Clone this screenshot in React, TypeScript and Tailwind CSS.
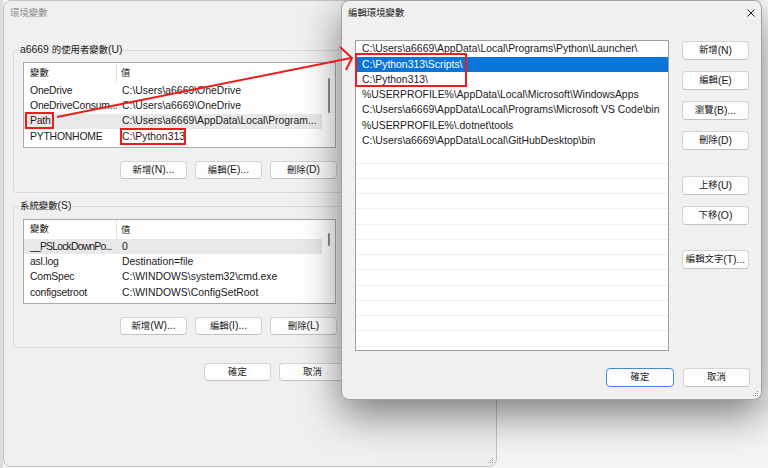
import type { ReactNode } from "react";

const userVars = [
  ["OneDrive", "C:\\Users\\a6669\\OneDrive"],
  ["OneDriveConsum...", "C:\\Users\\a6669\\OneDrive"],
  ["Path", "C:\\Users\\a6669\\AppData\\Local\\Program..."],
  ["PYTHONHOME", "C:\\Python313"],
];

const systemVars = [
  ["__PSLockDownPo...", "0"],
  ["asl.log", "Destination=file"],
  ["ComSpec", "C:\\WINDOWS\\system32\\cmd.exe"],
  ["configsetroot", "C:\\WINDOWS\\ConfigSetRoot"],
];

const paths = [
  "C:\\Users\\a6669\\AppData\\Local\\Programs\\Python\\Launcher\\",
  "C:\\Python313\\Scripts\\",
  "C:\\Python313\\",
  "%USERPROFILE%\\AppData\\Local\\Microsoft\\WindowsApps",
  "C:\\Users\\a6669\\AppData\\Local\\Programs\\Microsoft VS Code\\bin",
  "%USERPROFILE%\\.dotnet\\tools",
  "C:\\Users\\a6669\\AppData\\Local\\GitHubDesktop\\bin",
];

// CJK glyphs render a bit smaller than the latin text in the original
function Zh({ children }: { children: ReactNode }) {
  return <span className="text-[9.4px]">{children}</span>;
}

function Button({ children, primary, short }: { children: ReactNode; primary?: boolean; short?: boolean }) {
  if (primary) {
    return (
      <div className="flex h-[19px] w-[68px] items-center justify-center rounded-[4px] border border-[#3f8bd8] bg-[#fdfdfd]">
        {children}
      </div>
    );
  }
  return (
    <div
      className={
        short
          ? "flex h-[18px] w-[67px] items-center justify-center rounded-[4px] border border-[#d3d3d3] border-b-[#c2c2c2] bg-[#fdfdfd]"
          : "flex h-[19px] w-[67px] items-center justify-center rounded-[4px] border border-[#d3d3d3] border-b-[#c2c2c2] bg-[#fdfdfd]"
      }
    >
      {children}
    </div>
  );
}

function Grip() {
  return (
    <svg width="6" height="6" viewBox="0 0 6 6" className="absolute bottom-[2px] right-[2px]">
      <g fill="#9a9a9a">
        <rect x="4" y="0" width="1" height="1" />
        <rect x="4" y="2" width="1" height="1" />
        <rect x="2" y="2" width="1" height="1" />
        <rect x="4" y="4" width="1" height="1" />
        <rect x="2" y="4" width="1" height="1" />
        <rect x="0" y="4" width="1" height="1" />
      </g>
    </svg>
  );
}

function VarList({ rows, selected, system }: { rows: string[][]; selected: number; system?: boolean }) {
  return (
    <div className={system ? "flex h-[85px] w-[313px] border border-[#ababab] bg-white" : "flex h-[86px] w-[313px] border border-[#ababab] bg-white"}>
      <div className="w-[298px] overflow-hidden">
        <div className={system ? "flex h-[19px] items-center" : "flex h-[20px] items-center"}>
          <div className="flex h-full w-[93px] items-center border-r border-[#e5e5e5] pl-[6px]">
            <Zh>變數</Zh>
          </div>
          <div className="pl-[4px]">
            <Zh>值</Zh>
          </div>
        </div>
        {rows.map((r, i) => (
          <div key={r[0]} className={i === selected ? "flex h-[15.3px] items-center bg-[#e9e9e9]" : "flex h-[15.3px] items-center"}>
            <div
              className={
                r[0].startsWith("__")
                  ? "w-[93px] overflow-hidden whitespace-nowrap pl-[6px] tracking-[-0.8px]"
                  : "w-[93px] overflow-hidden whitespace-nowrap pl-[6px] tracking-[-0.2px]"
              }
            >
              {r[0]}
            </div>
            <div className="whitespace-nowrap pl-[5px]">{r[1]}</div>
          </div>
        ))}
      </div>
      <div className="w-[13px] pl-[6px]">
        <div className={system ? "mt-[13px] h-[13px] w-[2px] rounded-full bg-[#8c8c8c]" : "mt-[15px] h-[35px] w-[2px] rounded-full bg-[#8c8c8c]"} />
      </div>
    </div>
  );
}

function EnvDialog() {
  return (
    <div className="absolute left-[3px] top-0 h-[467px] w-[494px] rounded-lg border border-[#c4c4c4] bg-[#f0f0f0]">
      <div className="flex h-[24px] items-center pl-[6px] text-[#8e8e8e]">
        <Zh>環境變數</Zh>
      </div>

      <div className="relative ml-[9px] mt-[25px] h-[143px] w-[334px] rounded-[3px] border border-[#dadada] pl-[9px] pt-[11px]">
        <span className="absolute -top-[8px] left-[5px] bg-[#f0f0f0] px-[1px] leading-[14px]">
          a6669 <Zh>的使用者變數</Zh>(U)
        </span>
        <VarList rows={userVars} selected={2} />
        <div className="mt-[13px] flex justify-end gap-[8px] pr-[9px]">
          <Button short><Zh>新增</Zh>(N)...</Button>
          <Button short><Zh>編輯</Zh>(E)...</Button>
          <Button short><Zh>刪除</Zh>(D)</Button>
        </div>
      </div>

      <div className="relative ml-[9px] mt-[13px] h-[142px] w-[334px] rounded-[3px] border border-[#dadada] pl-[9px] pt-[12px]">
        <span className="absolute -top-[8px] left-[5px] bg-[#f0f0f0] px-[1px] leading-[14px]">
          <Zh>系統變數</Zh>(S)
        </span>
        <VarList rows={systemVars} selected={0} system />
        <div className="mt-[13px] flex justify-end gap-[8px] pr-[9px]">
          <Button short><Zh>新增</Zh>(W)...</Button>
          <Button short><Zh>編輯</Zh>(I)...</Button>
          <Button short><Zh>刪除</Zh>(L)</Button>
        </div>
      </div>

      <div className="ml-[9px] mt-[15px] flex w-[334px] justify-end gap-[8px] pr-[1px]">
        <Button short><Zh>確定</Zh></Button>
        <Button short><Zh>取消</Zh></Button>
      </div>
      <Grip />
    </div>
  );
}

function EditDialog() {
  return (
    <div className="absolute left-[341px] top-0 h-[400px] w-[421px] rounded-lg border border-[#a2a2a2] bg-[#f0f0f0] shadow-[0_14px_40px_rgba(0,0,0,0.5)]">
      <div className="flex h-[24px] items-center justify-between pl-[6px] pr-[6px]">
        <Zh>編輯環境變數</Zh>
        <svg width="8" height="8" viewBox="0 0 8 8">
          <path d="M0.5 0.5 L7.5 7.5 M7.5 0.5 L0.5 7.5" stroke="#1a1a1a" strokeWidth="1" />
        </svg>
      </div>

      <div className="mt-[15px] flex pl-[13px]">
        <div className="h-[311px] w-[314px] overflow-hidden border border-[#a0a0a0] bg-white">
          <div className="h-[0.5px]" />
          {paths.map((p, i) => (
            <div
              key={p}
              className={i === 1 ? "flex h-[15.25px] items-center whitespace-nowrap bg-[#0b74d7] pl-[6px] text-white" : "flex h-[15.25px] items-center whitespace-nowrap pl-[6px]"}
            >
              {p}
            </div>
          ))}
          {Array.from({ length: 14 }).map((_, i) => (
            <div key={i} className="h-[15.25px] border-b border-[#eeeeee]" />
          ))}
        </div>

        <div className="ml-[13px] flex flex-col pt-[1px]">
          <Button><Zh>新增</Zh>(N)</Button>
          <div className="mt-[11px]"><Button><Zh>編輯</Zh>(E)</Button></div>
          <div className="mt-[11px]"><Button><Zh>瀏覽</Zh>(B)...</Button></div>
          <div className="mt-[11px]"><Button><Zh>刪除</Zh>(D)</Button></div>
          <div className="mt-[26px]"><Button><Zh>上移</Zh>(U)</Button></div>
          <div className="mt-[11px]"><Button><Zh>下移</Zh>(O)</Button></div>
          <div className="mt-[25px]"><Button><Zh>編輯文字</Zh>(T)...</Button></div>
        </div>
      </div>

      <div className="mt-[17px] flex justify-end gap-[9px] pr-[11px]">
        <Button primary><Zh>確定</Zh></Button>
        <Button><Zh>取消</Zh></Button>
      </div>
      <Grip />
    </div>
  );
}

export default function App() {
  return (
    <div className="relative h-[468px] w-[768px] overflow-hidden bg-[#f4f4f4] font-['Liberation_Sans','Noto_Sans_CJK_TC',sans-serif] text-[10.4px] text-[#1a1a1a]">
      {/* edges of windows further back */}
      <div className="absolute left-0 top-0 h-full w-[3px] bg-[#dedede]" />
      <div className="absolute right-0 top-0 h-[400px] w-[8px] bg-[#fafafa]" />

      <EnvDialog />
      <EditDialog />

      {/* red annotations */}
      <svg className="pointer-events-none absolute inset-0" width="768" height="468" viewBox="0 0 768 468">
        <g fill="none" stroke="#ee1c1c" strokeWidth="2">
          <rect x="26" y="113" width="27" height="15" />
          <rect x="121" y="129" width="64" height="15" />
          <rect x="356" y="54" width="110" height="32" />
          <line x1="57" y1="117" x2="351" y2="58" />
          <polyline points="340,47 352,58 346,70" strokeLinejoin="miter" />
        </g>
      </svg>
    </div>
  );
}
